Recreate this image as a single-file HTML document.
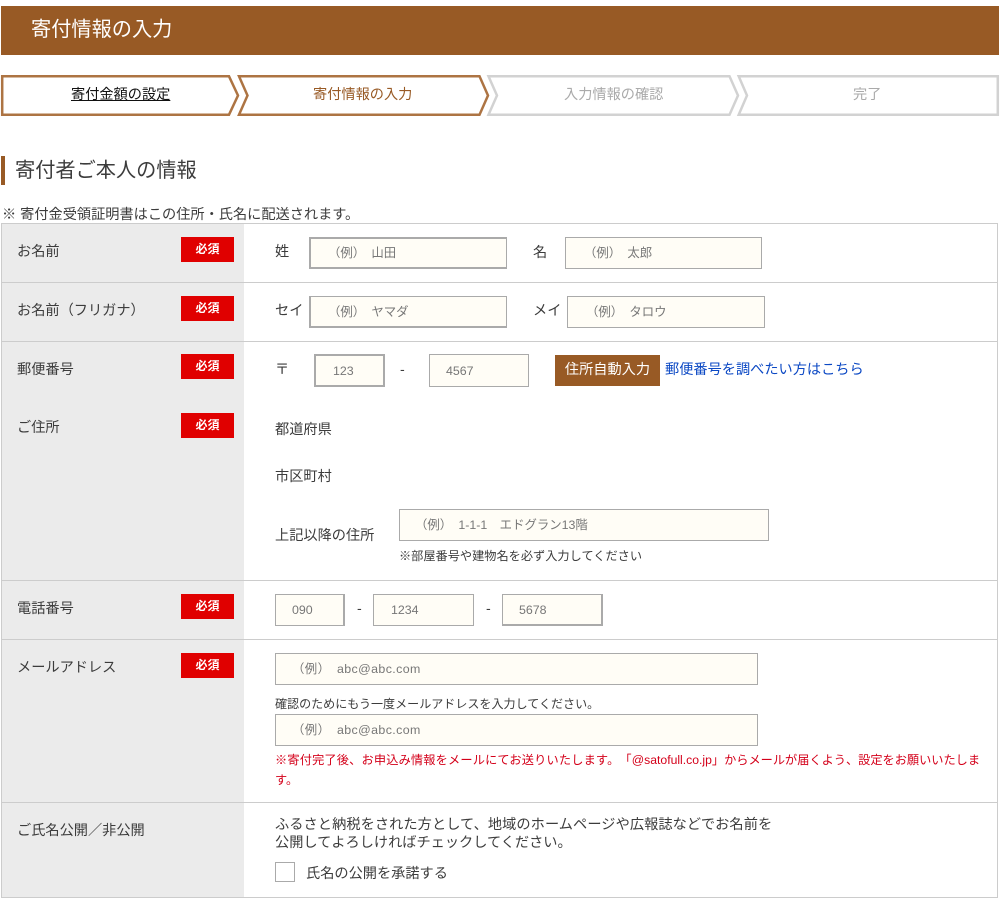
<!DOCTYPE html>
<html lang="ja"><head><meta charset="utf-8"><title>寄付情報の入力</title>
<style>
html,body{margin:0;padding:0;background:#fff}
body{position:relative;width:1003px;height:902px;overflow:hidden;font-family:"Liberation Sans","Noto Sans CJK JP",sans-serif;font-size:14.2px;color:#3c3c3c;text-spacing-trim:space-all}
.a{position:absolute;white-space:nowrap;line-height:20px}
.b{position:absolute;left:181px;width:53px;height:25px;background:#e00000;color:#fff;font-size:12px;line-height:24px;text-align:center;font-weight:bold}
.l{position:absolute;left:1px;width:996px;height:1px;background:#ccc}
input{position:absolute;box-sizing:border-box;margin:0;height:32px;background:#fffdf6;border:1px solid #aaa;border-radius:0;outline:0;font-family:"Liberation Sans","Noto Sans CJK JP",sans-serif;font-size:12.4px;color:#777;padding:0 0 0 18px;text-spacing-trim:normal}
input::placeholder{color:#777;opacity:1}
.s{font-size:12.2px}
</style></head><body>
<div style="position:absolute;left:1px;top:6px;width:998px;height:49px;background:#985a25"></div>
<div class="a" style="left:31px;top:16px;font-size:20.2px;line-height:28px;color:#fff">寄付情報の入力</div>

<svg style="position:absolute;left:0;top:0" width="1003" height="130">
<g fill="#fff" stroke-width="2.5">
<polygon stroke="#ad7443" points="2.2,76.3 229,76.3 238,95.5 229,114.7 2.2,114.7"/>
<polygon stroke="#ad7443" points="239,76.3 479.5,76.3 488,95.5 479.5,114.7 239,114.7 247.5,95.5"/>
<polygon stroke="#d2d2d2" points="488.5,76.3 729.5,76.3 738,95.5 729.5,114.7 488.5,114.7 497,95.5"/>
<polygon stroke="#d2d2d2" points="738.7,76.3 997.8,76.3 997.8,114.7 738.7,114.7 747,95.5"/>
</g></svg>
<div class="a" style="left:71px;top:85px;color:#111;text-decoration:underline">寄付金額の設定</div>
<div class="a" style="left:313px;top:85px;color:#985a25">寄付情報の入力</div>
<div class="a" style="left:564px;top:85px;color:#aaa">入力情報の確認</div>
<div class="a" style="left:853px;top:85px;color:#aaa">完了</div>

<div style="position:absolute;left:1px;top:156px;width:4px;height:29px;background:#985a25"></div>
<div class="a" style="left:15px;top:157px;font-size:20.2px;line-height:28px">寄付者ご本人の情報</div>
<div class="a" style="left:2px;top:205px">※ 寄付金受領証明書はこの住所・氏名に配送されます。</div>

<div style="position:absolute;box-sizing:border-box;left:1px;top:223px;width:997px;height:675px;border:1px solid #ccc"></div>
<div style="position:absolute;left:2px;top:224px;width:242px;height:673px;background:#ebebeb"></div>
<div class="l" style="top:282px"></div>
<div class="l" style="top:341px"></div>
<div class="l" style="top:580px"></div>
<div class="l" style="top:639px"></div>
<div class="l" style="top:802px"></div>

<div class="a" style="left:17px;top:242px">お名前</div>
<div class="b" style="top:237px">必須</div>
<div class="a" style="left:275px;top:242px">姓</div>
<input style="left:309px;top:237px;width:198px;border-width:2px 1px 2px 2px;padding-left:17px" placeholder="（例）　山田">
<div class="a" style="left:533px;top:243px">名</div>
<input style="left:565px;top:237px;width:197px" placeholder="（例）　太郎">

<div class="a" style="left:17px;top:301px">お名前（フリガナ）</div>
<div class="b" style="top:296px">必須</div>
<div class="a" style="left:275px;top:301px">セイ</div>
<input style="left:309px;top:296px;width:198px;border-width:1px 1px 2px 2px;padding-left:17px" placeholder="（例）　ヤマダ">
<div class="a" style="left:533px;top:301px">メイ</div>
<input style="left:567px;top:296px;width:198px" placeholder="（例）　タロウ">

<div class="a" style="left:17px;top:360px">郵便番号</div>
<div class="b" style="top:354px">必須</div>
<div class="a" style="left:275px;top:360px">〒</div>
<input style="left:314px;top:354px;width:71px;height:33px;border-width:2px;padding-left:17px" placeholder="123">
<div class="a" style="left:400px;top:360px">-</div>
<input style="left:429px;top:354px;width:100px;height:33px;padding-left:16px" placeholder="4567">
<div style="position:absolute;left:555px;top:355px;width:105px;height:31px;background:#985a25;color:#fff;line-height:31px;text-align:center">住所自動入力</div>
<div class="a" style="left:665px;top:360px;color:#0b48c4">郵便番号を調べたい方はこちら</div>

<div class="a" style="left:17px;top:418px">ご住所</div>
<div class="b" style="top:413px">必須</div>
<div class="a" style="left:275px;top:420px">都道府県</div>
<div class="a" style="left:275px;top:467px">市区町村</div>
<div class="a" style="left:275px;top:526px">上記以降の住所</div>
<input style="left:399px;top:509px;width:370px;padding-left:15px" placeholder="（例）　1-1-1　エドグラン13階">
<div class="a s" style="left:399px;top:546px">※部屋番号や建物名を必ず入力してください</div>

<div class="a" style="left:17px;top:599px">電話番号</div>
<div class="b" style="top:594px">必須</div>
<input style="left:275px;top:594px;width:70px;border-right-width:2px;padding-left:16px" placeholder="090">
<div class="a" style="left:357px;top:599px">-</div>
<input style="left:373px;top:594px;width:101px;padding-left:17px" placeholder="1234">
<div class="a" style="left:486px;top:599px">-</div>
<input style="left:502px;top:594px;width:101px;border-width:1px 2px 2px 1px;padding-left:16px" placeholder="5678">

<div class="a" style="left:17px;top:658px">メールアドレス</div>
<div class="b" style="top:653px">必須</div>
<input style="left:275px;top:653px;width:483px;padding-left:16px;letter-spacing:.4px" placeholder="（例）　abc@abc.com">
<div class="a" style="left:275px;top:694px;font-size:12.05px">確認のためにもう一度メールアドレスを入力してください。</div>
<input style="left:275px;top:714px;width:483px;padding-left:16px;letter-spacing:.4px" placeholder="（例）　abc@abc.com">
<div class="a s" style="left:275px;top:750px;color:#d4001a"><span style="letter-spacing:.17px">※寄付完了後、お申込み情報をメールにてお送りいたします。「</span><span style="font-size:12.2px">@satofull.co.jp</span>」からメールが届くよう、設定をお願いいたしま</div>
<div class="a s" style="left:275px;top:770px;color:#d4001a">す。</div>

<div class="a" style="left:17px;top:821px">ご氏名公開／非公開</div>
<div class="a" style="left:275px;top:815px;letter-spacing:.08px">ふるさと納税をされた方として、地域のホームページや広報誌などでお名前を</div>
<div class="a" style="left:275px;top:833px">公開してよろしければチェックしてください。</div>
<div style="position:absolute;box-sizing:border-box;left:275px;top:862px;width:20px;height:20px;background:#fff;border:1px solid #aaa"></div>
<div class="a" style="left:306px;top:864px">氏名の公開を承諾する</div>
</body></html>
